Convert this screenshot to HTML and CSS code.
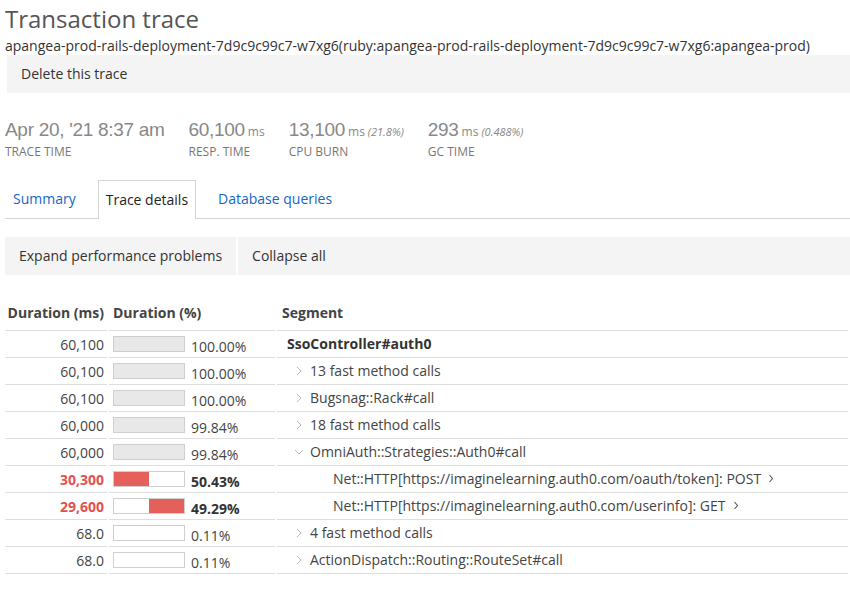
FILE: index.html
```html
<!DOCTYPE html>
<html>
<head>
<meta charset="utf-8">
<link rel="stylesheet" href="styles.css">
</head>
<body>
<div class="page">
  <h1 class="title">Transaction trace</h1>
  <div class="subtitle">apangea-prod-rails-deployment-7d9c9c99c7-w7xg6(ruby:apangea-prod-rails-deployment-7d9c9c99c7-w7xg6:apangea-prod)</div>
  <div class="delete-bar"><span>Delete this trace</span></div>

  <div class="metrics">
    <div class="metric">
      <div class="value">Apr 20, '21 8:37 am</div>
      <div class="label">TRACE TIME</div>
    </div>
    <div class="metric">
      <div class="value">60,100<span class="unit">ms</span></div>
      <div class="label">RESP. TIME</div>
    </div>
    <div class="metric">
      <div class="value">13,100<span class="unit">ms</span><span class="pct">(21.8%)</span></div>
      <div class="label">CPU BURN</div>
    </div>
    <div class="metric">
      <div class="value">293<span class="unit">ms</span><span class="pct">(0.488%)</span></div>
      <div class="label">GC TIME</div>
    </div>
  </div>

  <div class="tabs">
    <div class="tab link">Summary</div>
    <div class="tab active">Trace details</div>
    <div class="tab link">Database queries</div>
  </div>

  <div class="actions">
    <div class="btn">Expand performance problems</div>
    <div class="btn grow">Collapse all</div>
  </div>

  <table class="trace">
    <thead>
      <tr>
        <th class="c-ms">Duration (ms)</th>
        <th class="c-pct">Duration (%)</th>
        <th class="c-seg">Segment</th>
      </tr>
    </thead>
    <tbody>
      <tr>
        <td class="c-ms">60,100</td>
        <td class="c-pct"><div class="pctcell"><span class="bar"><span class="fill" style="left:0;width:100%"></span></span><span class="ptext">100.00%</span></div></td>
        <td class="c-seg"><div class="seg d0"><span class="name bold">SsoController#auth0</span></div></td>
      </tr>
      <tr>
        <td class="c-ms">60,100</td>
        <td class="c-pct"><div class="pctcell"><span class="bar"><span class="fill" style="left:0;width:100%"></span></span><span class="ptext">100.00%</span></div></td>
        <td class="c-seg"><div class="seg d1"><svg class="chev" width="6" height="10" viewBox="0 0 6 10"><polyline points="1,1 5,5 1,9" fill="none" stroke="#b8b8b8" stroke-width="1"/></svg><span class="name">13 fast method calls</span></div></td>
      </tr>
      <tr>
        <td class="c-ms">60,100</td>
        <td class="c-pct"><div class="pctcell"><span class="bar"><span class="fill" style="left:0;width:100%"></span></span><span class="ptext">100.00%</span></div></td>
        <td class="c-seg"><div class="seg d1"><svg class="chev" width="6" height="10" viewBox="0 0 6 10"><polyline points="1,1 5,5 1,9" fill="none" stroke="#b8b8b8" stroke-width="1"/></svg><span class="name">Bugsnag::Rack#call</span></div></td>
      </tr>
      <tr>
        <td class="c-ms">60,000</td>
        <td class="c-pct"><div class="pctcell"><span class="bar"><span class="fill" style="left:0;width:100%"></span></span><span class="ptext">99.84%</span></div></td>
        <td class="c-seg"><div class="seg d1"><svg class="chev" width="6" height="10" viewBox="0 0 6 10"><polyline points="1,1 5,5 1,9" fill="none" stroke="#b8b8b8" stroke-width="1"/></svg><span class="name">18 fast method calls</span></div></td>
      </tr>
      <tr>
        <td class="c-ms">60,000</td>
        <td class="c-pct"><div class="pctcell"><span class="bar"><span class="fill" style="left:0;width:100%"></span></span><span class="ptext">99.84%</span></div></td>
        <td class="c-seg"><div class="seg d1"><svg class="chev down" width="10" height="6" viewBox="0 0 10 6"><polyline points="1,1 5,5 9,1" fill="none" stroke="#b8b8b8" stroke-width="1"/></svg><span class="name">OmniAuth::Strategies::Auth0#call</span></div></td>
      </tr>
      <tr class="hot">
        <td class="c-ms">30,300</td>
        <td class="c-pct"><div class="pctcell"><span class="bar"><span class="fill red" style="left:0;width:50.43%"></span></span><span class="ptext">50.43%</span></div></td>
        <td class="c-seg"><div class="seg d2"><span class="name">Net::HTTP[https://imaginelearning.auth0.com/oauth/token]: POST</span><svg class="after" width="6" height="9" viewBox="0 0 6 9"><polyline points="1.5,1 4.5,4.5 1.5,8" fill="none" stroke="#555" stroke-width="1.1"/></svg></div></td>
      </tr>
      <tr class="hot">
        <td class="c-ms">29,600</td>
        <td class="c-pct"><div class="pctcell"><span class="bar"><span class="fill red" style="left:50.71%;width:49.29%"></span></span><span class="ptext">49.29%</span></div></td>
        <td class="c-seg"><div class="seg d2"><span class="name">Net::HTTP[https://imaginelearning.auth0.com/userinfo]: GET</span><svg class="after" width="6" height="9" viewBox="0 0 6 9"><polyline points="1.5,1 4.5,4.5 1.5,8" fill="none" stroke="#555" stroke-width="1.1"/></svg></div></td>
      </tr>
      <tr>
        <td class="c-ms">68.0</td>
        <td class="c-pct"><div class="pctcell"><span class="bar"></span><span class="ptext">0.11%</span></div></td>
        <td class="c-seg"><div class="seg d1"><svg class="chev" width="6" height="10" viewBox="0 0 6 10"><polyline points="1,1 5,5 1,9" fill="none" stroke="#b8b8b8" stroke-width="1"/></svg><span class="name">4 fast method calls</span></div></td>
      </tr>
      <tr>
        <td class="c-ms">68.0</td>
        <td class="c-pct"><div class="pctcell"><span class="bar"></span><span class="ptext">0.11%</span></div></td>
        <td class="c-seg"><div class="seg d1"><svg class="chev" width="6" height="10" viewBox="0 0 6 10"><polyline points="1,1 5,5 1,9" fill="none" stroke="#b8b8b8" stroke-width="1"/></svg><span class="name">ActionDispatch::Routing::RouteSet#call</span></div></td>
      </tr>
    </tbody>
  </table>
</div>
</body>
</html>
```

FILE: styles.css
```css
* { box-sizing: border-box; }
html, body { margin: 0; padding: 0; background: #fff; }
body {
  font-family: "Open Sans", "Liberation Sans", sans-serif;
  font-size: 14px;
  color: #333;
  overflow: hidden;
}
.page { padding-left: 5px; }

.title {
  margin: 4px 0 0;
  font-size: 24px;
  line-height: 30px;
  font-weight: 400;
  color: #555;
}
.subtitle {
  margin-top: 3px;
  font-size: 14px;
  line-height: 18px;
  color: #333;
  white-space: nowrap;
}
.delete-bar {
  margin-left: 2px;
  height: 38px;
  background: #f4f4f4;
  display: flex;
  align-items: center;
  padding-left: 14px;
  padding-bottom: 2px;
  color: #333;
}

.metrics {
  display: flex;
  gap: 24px;
  margin-top: 25px;
}
.metric .value {
  height: 24px;
  font-family: "Liberation Sans", Arial, sans-serif;
  font-size: 19px;
  letter-spacing: -0.3px;
  line-height: 24px;
  color: #888;
  white-space: nowrap;
}
.metric .unit {
  font-family: "Open Sans", sans-serif;
  font-size: 12px;
  line-height: 1;
  letter-spacing: 0;
  margin-left: 3px;
}
.metric .pct {
  font-family: "Open Sans", sans-serif;
  font-size: 11px;
  line-height: 1;
  font-style: italic;
  letter-spacing: 0;
  margin-left: 3px;
}
.metric .label {
  margin-top: 2px;
  height: 16px;
  font-size: 12px;
  line-height: 16px;
  color: #777;
}

.tabs {
  display: flex;
  margin-top: 20px;
  height: 39px;
  border-bottom: 1px solid #d4d4d4;
}
.tab {
  padding: 0 8px 2px;
  height: 38px;
  display: flex;
  align-items: center;
  margin-right: 8px;
}
.tab.link { color: #1467c9; }
.tab.active {
  color: #222;
  border: 1px solid #d4d4d4;
  border-bottom: none;
  height: 39px;
  background: #fff;
  margin-bottom: -1px;
  padding: 0 7px 2px;
  margin-left: 6px;
  margin-right: 14px;
}

.actions {
  display: flex;
  gap: 2px;
  margin-top: 18px;
}
.btn {
  height: 38px;
  display: flex;
  align-items: center;
  padding: 0 14px 2px;
  background: #f4f4f4;
  color: #333;
}
.btn.grow { flex: 1; }

.trace {
  margin-top: 18px;
  margin-left: -2px;
  width: calc(100% + 2px);
  border-collapse: separate;
  border-spacing: 2px 0;
  color: #444;
}
.trace th {
  height: 38px;
  font-size: 14px;
  font-weight: 700;
  color: #444;
  text-align: left;
  vertical-align: middle;
  border-bottom: 1px solid #dedede;
  padding: 1px 0 0;
  white-space: nowrap;
}
.trace td {
  height: 27px;
  padding: 0;
  border-bottom: 1px solid #dedede;
  vertical-align: middle;
  white-space: nowrap;
}
.c-ms { width: 102px; text-align: right !important; padding-right: 3px !important; }
.c-pct { width: 166px; padding-left: 4px !important; }
.c-seg { padding-left: 4px !important; }
.trace th.c-seg { padding-left: 5px !important; }

.pctcell { display: flex; align-items: center; }
.bar {
  position: relative;
  display: block;
  width: 72px;
  height: 16px;
  border: 1px solid #cfcfcf;
  background: #fff;
  flex: none;
  margin-bottom: 1px;
}
.fill {
  position: absolute;
  top: 0;
  bottom: 0;
  background: #e8e8e8;
}
.fill.red { background: #e5605a; }
.ptext { margin-left: 6px; padding-top: 6px; line-height: 18px; }

.hot .c-ms { color: #e2514c; font-weight: 700; }
.hot .ptext { font-weight: 700; color: #333; }

.seg { display: flex; align-items: center; color: #444; padding-bottom: 1px; }
.seg .bold { font-weight: 700; color: #333; }
.seg.d0 { padding-left: 6px; }
.seg.d1 { padding-left: 15px; }
.seg.d2 { padding-left: 52px; }
.chev { flex: none; margin-right: 8px; }
.chev.down { margin-left: -2px; margin-right: 6px; }
.after { margin-left: 7px; flex: none; }
```
